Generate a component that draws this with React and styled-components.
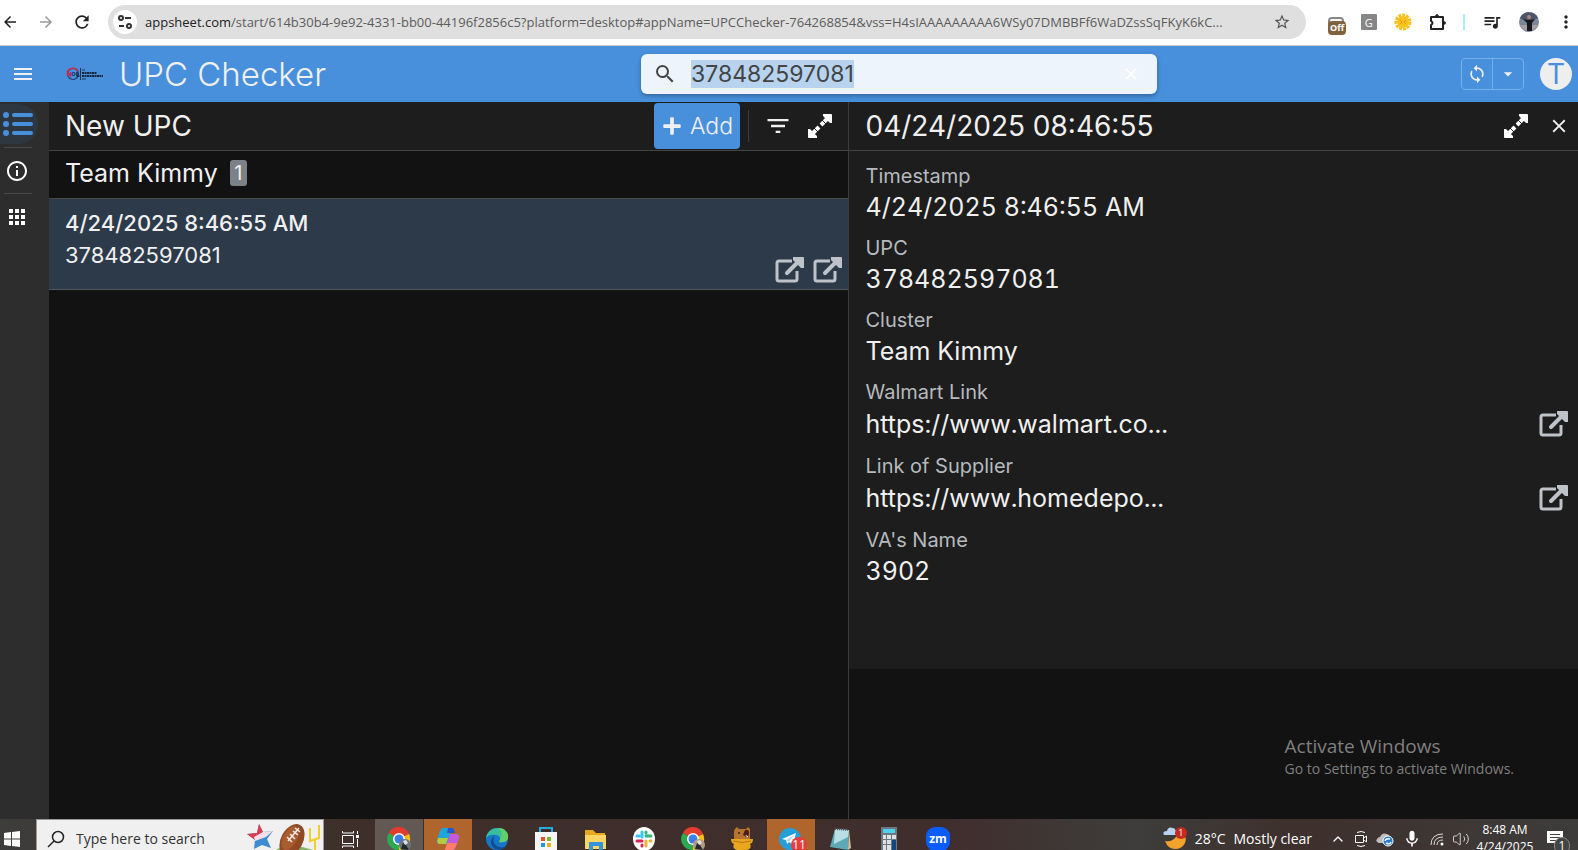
import React, { useEffect, useRef } from "react";
import styled, { createGlobalStyle, css } from "styled-components";
import {
  MdApps,
  MdArrowBack,
  MdArrowDropDown,
  MdArrowForward,
  MdClose,
  MdFilterList,
  MdInfoOutline,
  MdMenu,
  MdMic,
  MdMoreVert,
  MdQueueMusic,
  MdRefresh,
  MdSearch,
  MdStarOutline,
  MdSync,
} from "react-icons/md";
import { FaPlus } from "react-icons/fa";
import { ChevronUp, Volume2 } from "lucide-react";

const GlobalStyle = createGlobalStyle`
  * {
    box-sizing: border-box;
  }
  body {
    margin: 0;
    background: #121212;
    overflow: hidden;
  }
  button, input {
    font: inherit;
    color: inherit;
  }
  button {
    display: inline-flex;
    align-items: center;
    justify-content: center;
    padding: 0;
    border: 0;
    background: none;
  }
  h1, h2, h3, p, dl, dt, dd {
    margin: 0;
    font-weight: 400;
  }
  svg {
    display: block;
    flex: none;
  }
`;

const fields = [
  { label: "Timestamp", value: "4/24/2025 8:46:55 AM" },
  { label: "UPC", value: "378482597081" },
  { label: "Cluster", value: "Team Kimmy" },
  { label: "Walmart Link", value: "https://www.walmart.co...", link: true },
  { label: "Link of Supplier", value: "https://www.homedepo...", link: true },
  { label: "VA's Name", value: "3902" },
];

const ExpandIcon = () => (
  <svg width="28" height="28" viewBox="0 0 28 28" fill="#fff">
    <path d="M17 2h8q1 0 1 1v8h-2l-7-7zM11 26H3q-1 0-1-1v-8h2l7 7z" />
    <path d="M23 5L15 13M13 15L5 23" stroke="#fff" strokeWidth="4" />
    <path d="M16 8l4 4M8 16l4 4" stroke="#1d1d1d" strokeWidth="1" />
  </svg>
);

const OpenIcon = () => (
  <svg width="30" height="28" viewBox="0 0 30 28" fill="none" stroke="#bec3c9">
    <path d="M17 5H4q-2 0-2 2v16q0 2 2 2h16q2 0 2-2v-8" strokeWidth="3" />
    <path d="M12 17L25 4" strokeWidth="4" strokeLinecap="round" />
    <path d="M18 1h10q1 0 1 1v10h-3l-8-8z" fill="#bec3c9" stroke="none" />
  </svg>
);

const ListIcon = () => (
  <svg width="30" height="24" viewBox="0 0 30 24" fill="#4890dc">
    <circle cx="3" cy="3" r="3" />
    <circle cx="3" cy="12" r="3" />
    <circle cx="3" cy="21" r="3" />
    <path d="M11 3h17M11 12h17M11 21h17" stroke="#4890dc" strokeWidth="4" strokeLinecap="round" />
  </svg>
);

const TuneIcon = () => (
  <svg width="14" height="14" viewBox="0 0 14 14" fill="none" stroke="#333" strokeWidth="2">
    <circle cx="3" cy="3" r="2" />
    <path d="M7 3h6M1 11h5" />
    <circle cx="11" cy="11" r="2" />
  </svg>
);

const PuzzleIcon = () => (
  <svg width="18" height="18" viewBox="0 0 18 18" fill="none" stroke="#222" strokeWidth="2">
    <path d="M2 4h12v12H2v-4q3-2 0-4z" strokeLinejoin="round" />
    <path d="M6 3q2-4 4 0zM15 8q4 2 0 4z" fill="#222" stroke="none" />
  </svg>
);

const Logo = () => (
  <svg width="38" height="16" viewBox="0 0 38 16">
    <circle cx="7" cy="8" r="5.5" fill="none" stroke="#243a63" strokeWidth="1.2" />
    <path d="M2 5a6 6 0 0 1 10 0" fill="none" stroke="#c52c50" strokeWidth="1.6" />
    <path d="M1.500 10V6l3 4V6" fill="none" stroke="#d0244c" strokeWidth="1.4" />
    <circle cx="7.500" cy="8" r="1.500" fill="none" stroke="#143a80" strokeWidth="1.2" />
    <path d="M11 6v4h2.500" fill="none" stroke="#18263e" strokeWidth="1.4" />
    <path d="M14.500 2v12" stroke="#20344e" />
    <path d="M16 4h3M16 13h4" stroke="#1d3450" />
    <path d="M16 7h15M16 10h21" stroke="#17263a" strokeWidth="2" strokeDasharray="2 .5" />
  </svg>
);

const Chrome = ({ face }) => (
  <svg width="24" height="24" viewBox="0 0 24 24">
    <path d="M12 12L2 6a11 11 0 0 1 20 1z" fill="#e33b2e" />
    <path d="M12 12L22 7a11 11 0 0 1-10 16z" fill="#fbc116" />
    <path d="M12 12v11A11 11 0 0 1 2 6z" fill="#2da94f" />
    <circle cx="12" cy="12" r="6" fill="#fff" />
    <circle cx="12" cy="12" r="4.500" fill="#3d7fe8" />
    <circle cx="18" cy="18" r="6" fill={face} />
    <path d="M14 22l2-6 3 2 3 5z" fill="#26282b" />
    <path d="M16 14l3-1 2 3-3 2z" fill="#dce2e6" />
  </svg>
);

const Copilot = () => (
  <svg width="24" height="24" viewBox="0 0 24 24">
    <path d="M7 1h9l-5 16H4q-4 0-3-4L4 4q1-3 3-3z" fill="#20a5d8" />
    <path d="M2 11h10l-2 6H4q-4 0-2-6z" fill="#b6c93d" />
    <path d="M12 1h4q2 0 3 5h-8z" fill="#2657cf" />
    <path d="M14 7h6q4 0 3 4l-3 9q-1 3-4 3H9z" fill="#c05be0" />
    <path d="M11 16h10l-2 5q-1 2-3 2H9z" fill="#ff7e68" />
  </svg>
);

const Edge = () => (
  <svg width="24" height="24" viewBox="0 0 24 24">
    <circle cx="12" cy="12" r="11" fill="#1677c8" />
    <path d="M1 11C2 4 8 1 13 1c7 0 11 5 10 10-1 4-5 5-9 4 2-3 1-7-3-7-4-1-8 0-10 3z" fill="#38bd9e" />
    <path d="M13 1c7 0 11 5 10 10-1 4-5 5-9 4 2-4 5-10-1-14z" fill="#63cf68" />
    <path d="M10 9c-3 3-2 9 4 11 3 1 6 0 8-2-5 8-17 5-16-4q1-4 4-5z" fill="#124c91" />
  </svg>
);

const Store = () => (
  <svg width="24" height="26" viewBox="0 0 24 26">
    <path d="M6 7V2h12v5" fill="none" stroke="#29a9e0" strokeWidth="2" />
    <path d="M1 6h22v18q0 2-2 2H3q-2 0-2-2z" fill="#f6f6f6" />
    <path d="M7 11h4v4H7z" fill="#ee4f25" />
    <path d="M13 11h4v4h-4z" fill="#7cb82f" />
    <path d="M7 17h4v4H7z" fill="#2396df" />
    <path d="M13 17h4v4h-4z" fill="#f5ae18" />
  </svg>
);

const Folder = () => (
  <svg width="24" height="24" viewBox="0 0 24 24">
    <path d="M2 3h8l3 3h9v5H2z" fill="#e8a91e" />
    <path d="M2 8h21v14H2z" fill="#ffd665" />
    <path d="M6 24v-9h14v9h-4v-5h-6v5z" fill="#3693d8" />
  </svg>
);

const Slack = () => (
  <svg width="24" height="26" viewBox="0 0 24 26" fill="none" strokeWidth="3" strokeLinecap="round">
    <ellipse cx="12" cy="13" rx="11" ry="12" fill="#fff" />
    <path d="M10 6v5M5 10h2" stroke="#36c5f0" />
    <path d="M14 10h5M14 6v1" stroke="#2eb67d" />
    <path d="M14 15v5M18 15h1" stroke="#ecb22e" />
    <path d="M5 15h5M10 19v1" stroke="#e01e5a" />
  </svg>
);

const Bear = () => (
  <svg width="24" height="26" viewBox="0 0 24 26">
    <path d="M4 15V6q0-2 1-3l2-2 2 2h7l2-2 2 2v12z" fill="#b5742f" />
    <path d="M15 4q4-1 4 3l-1 5-5-3z" fill="#4d1e1a" />
    <path d="M15 9l3 1v2z" fill="#fff" />
    <circle cx="9" cy="7" r="1" fill="#402010" />
    <path d="M1 13h22q0 4-3 5 3 6-8 7-11-1-8-7-3-1-3-5z" fill="#e9a71d" />
    <path d="M3 15q9 3 18 0" stroke="#b87712" fill="none" />
  </svg>
);

const Telegram = () => (
  <svg width="24" height="24" viewBox="0 0 24 24">
    <circle cx="11" cy="12" r="11" fill="#259ed9" />
    <path d="M3 12l14-6-3 12-4-3-2 2-1-4z" fill="#fff" />
    <path d="M7 13l8-5-5 7z" fill="#b8d9ed" />
  </svg>
);

const Notepad = () => (
  <svg width="24" height="24" viewBox="0 0 24 24">
    <path d="M7 2l14 1-1 20-18-3z" fill="#5da9b5" />
    <path d="M7 2l14 1-1 7-14 7z" fill="#b9dfe4" />
    <path d="M21 3l2 18-3 2z" fill="#d2c49c" />
    <path d="M7 2l14 1" stroke="#555" strokeWidth="2" strokeDasharray="1 1" />
  </svg>
);

const Calculator = () => (
  <svg width="24" height="26" viewBox="0 0 24 26">
    <path d="M4 1h16v25H4z" fill="#6e7880" />
    <path d="M6 3h12v4H6z" fill="#4fd1ed" />
    <path d="M6 9h3v4H6zM10 9h4v4h-4zM15 9h4v4h-4zM6 14h3v4H6zM10 14h4v4h-4zM6 19h3v5H6zM10 19h4v5h-4z" fill="#dbe1e5" />
    <path d="M15 14h4v10h-4z" fill="#13467f" />
  </svg>
);

const WindowsIcon = () => (
  <svg width="16" height="16" viewBox="0 0 16 16" fill="#fff">
    <path d="M0 2l7-1v6.500H0zM8 1l8-1v7.500H8zM0 8.500h7V15l-7-1zM8 8.500h8V16l-8-1z" />
  </svg>
);

const FootballArt = () => (
  <svg width="76" height="38" viewBox="0 0 76 38">
    <path d="M24 34q8-8 20-10l30 8v6H24z" fill="#8cb56c" />
    <path d="M12 4l4 8 10-1-6 8 4 9-9-3-8 4 1-9-8-6 10-1z" fill="#3d8bd0" />
    <path d="M12 4l4 8-8 8-8-6 10-1z" fill="#dc3d4c" />
    <path d="M7 17l9-5 10-1-7 6-11 4z" fill="#f4dfe8" />
    <ellipse cx="45" cy="20" rx="11" ry="17" transform="rotate(28 45 20)" fill="#8f4a25" />
    <ellipse cx="43" cy="18" rx="7" ry="13" transform="rotate(28 43 18)" fill="#a85c30" />
    <path d="M41 21L52 8" stroke="#f3eae5" strokeWidth="1.500" />
    <path d="M40 17l5 5M43 14l5 5M46 11l5 4M48 8l5 4" stroke="#f3eae5" strokeWidth="1.500" />
    <path d="M63 8v13l9-3V5M68 20v14" fill="none" stroke="#efd02b" strokeWidth="2" />
  </svg>
);

const TaskViewIcon = () => (
  <svg width="18" height="18" viewBox="0 0 18 18" fill="none" stroke="#fff">
    <path d="M1.500 5.500h11v8h-11zM1.500 1v2h11V1M1.500 18v-2h11v2M16.500 1v3M16.500 9v8" />
    <path d="M15 5h3v3h-3z" fill="#fff" stroke="none" />
  </svg>
);

const SearchLens = () => (
  <svg width="18" height="18" viewBox="0 0 18 18" fill="none" stroke="#222" strokeWidth="1.500">
    <circle cx="11" cy="7" r="5.500" />
    <path d="M7 11l-6 6" />
  </svg>
);

const Flower = () => (
  <svg width="18" height="18" viewBox="0 0 18 18">
    <circle cx="9" cy="9" r="6" fill="#fbc21d" />
    <circle cx="9" cy="9" r="7" fill="none" stroke="#fbc21d" strokeWidth="3" strokeDasharray="3 1" />
    <path d="M6 7l2 2-2 2M12 7l-2 2 2 2" fill="none" stroke="#e69d10" />
  </svg>
);

const Portrait = () => (
  <svg width="20" height="20" viewBox="0 0 20 20">
    <circle cx="10" cy="10" r="10" fill="#7d8697" />
    <path d="M1 6a10 10 0 0 1 18 0l-5 2H4z" fill="#4c556c" />
    <path d="M1 13h18a10 10 0 0 1-18 0z" fill="#a7a0a0" />
    <path d="M4 7l4 1h4l4-1-3 4v8H8v-8z" fill="#17181d" />
    <circle cx="10" cy="5" r="2" fill="#b48472" />
  </svg>
);

const Moon = () => (
  <svg width="24" height="24" viewBox="0 0 24 24">
    <path d="M2 15q9 2 14-9 9 3 6 11-3 6-10 6T2 15z" fill="#f2a32c" />
    <path d="M1 9q-2-4 3-4 1-5 6-3 2 0 3 3 4 1 1 4z" fill="#b8d2f1" />
  </svg>
);

const MeetNow = () => (
  <svg width="14" height="18" viewBox="0 0 14 18" fill="none" stroke="#fff">
    <path d="M1.500 5.500h8v7h-8zM9.500 8l3-2v6l-3-2M3 2.500q4-2 8 0M3 15.500q4 2 8 0" />
  </svg>
);

const Cloud = () => (
  <svg width="18" height="16" viewBox="0 0 18 16">
    <path d="M3 12q-4-1-2-4 1-2 3-2 2-5 7-3 3 1 3 4 4 2 1 5z" fill="#bdbdbd" />
    <circle cx="12" cy="10" r="5" fill="#2479d0" stroke="#fff" />
    <path d="M9 10q1-3 5-2M15 11q-1 3-5 1" fill="none" stroke="#fff" strokeWidth="1.500" />
  </svg>
);

const Wifi = () => (
  <svg width="14" height="14" viewBox="0 0 14 14" fill="none" stroke="#ddd">
    <path d="M1 13Q1 2 13 2M4 13q0-8 9-8M7 13q0-5 6-5" />
    <circle cx="12" cy="12" r="1.500" fill="#fff" stroke="none" />
  </svg>
);

const Bubble = () => (
  <svg width="18" height="18" viewBox="0 0 18 18">
    <path d="M1 1h16v12h-5v4l-4-4H1z" fill="#fff" />
    <path d="M4 4.500h10M4 7.500h10M4 10.500h6" stroke="#444" />
  </svg>
);

const apps = [
  { name: "Chrome", icon: <Chrome face="#69747c" />, tone: "#635954" },
  { name: "Copilot", icon: <Copilot />, tone: "#b0652c" },
  { name: "Edge", icon: <Edge /> },
  { name: "Store", icon: <Store /> },
  { name: "Files", icon: <Folder /> },
  { name: "Slack", icon: <Slack /> },
  { name: "Chrome profile", icon: <Chrome face="#b79a83" /> },
  { name: "Bear", icon: <Bear /> },
  { name: "Telegram", icon: <Telegram />, tone: "#b0652c", count: 11 },
  { name: "Notepad", icon: <Notepad /> },
  { name: "Calculator", icon: <Calculator /> },
  { name: "Zoom", zoom: true },
];

const App = () => {
  const search = useRef(null);

  useEffect(() => {
    search.current.focus();
    search.current.select();
  }, []);

  return (
    <Screen>
      <GlobalStyle />
      <BrowserBar>
        <NavButtons>
          <button aria-label="Back"><MdArrowBack size={18} /></button>
          <NavOff aria-label="Forward" disabled><MdArrowForward size={18} /></NavOff>
          <button aria-label="Reload"><MdRefresh size={20} /></button>
        </NavButtons>
        <Address>
          <SiteButton aria-label="Site information"><TuneIcon /></SiteButton>
          <Url>
            <b>appsheet.com</b>
            /start/614b30b4-9e92-4331-bb00-44196f2856c5?platform=desktop#appName=UPCChecker-764268854&amp;vss=H4sIAAAAAAAAA6WSy07DMBBFf6WaDZssSqFKyK6kC...
          </Url>
          <button aria-label="Bookmark"><MdStarOutline size={18} color="#555" /></button>
        </Address>
        <Extensions>
          <OffButton aria-label="Blocker"><i /><span>Off</span></OffButton>
          <SquareG>G</SquareG>
          <button aria-label="Flower"><Flower /></button>
          <button aria-label="Extensions"><PuzzleIcon /></button>
          <Divider />
          <button aria-label="Media"><MdQueueMusic size={20} /></button>
          <button aria-label="Profile"><Portrait /></button>
          <button aria-label="Menu"><MdMoreVert size={20} /></button>
        </Extensions>
      </BrowserBar>

      <AppHeader>
        <Brand>
          <button aria-label="Open menu"><MdMenu size={24} /></button>
          <Logo />
          <h1>UPC Checker</h1>
        </Brand>
        <SearchBox>
          <MdSearch size={24} color="#444" />
          <SearchInput ref={search} aria-label="Search" defaultValue="378482597081" />
          <button aria-label="Clear"><MdClose size={20} color="#fff" /></button>
        </SearchBox>
        <Account>
          <SyncGroup>
            <button aria-label="Sync"><MdSync size={20} /></button>
            <button aria-label="Sync options"><MdArrowDropDown size={20} /></button>
          </SyncGroup>
          <Avatar aria-label="Account">T</Avatar>
        </Account>
      </AppHeader>

      <Workspace>
        <Rail>
          <RailButton $active aria-label="List"><ListIcon /></RailButton>
          <RailButton aria-label="About"><MdInfoOutline size={24} /></RailButton>
          <RailButton aria-label="Apps"><MdApps size={24} /></RailButton>
        </Rail>

        <ListPane>
          <PaneHeader>
            <h2>New UPC</h2>
            <AddButton><FaPlus size={20} />Add</AddButton>
            <Tools>
              <button aria-label="Filter"><MdFilterList size={28} /></button>
              <button aria-label="Expand"><ExpandIcon /></button>
            </Tools>
          </PaneHeader>
          <GroupRow>
            <h3>Team Kimmy</h3>
            <Count>1</Count>
          </GroupRow>
          <Record>
            <div>
              <strong>4/24/2025 8:46:55 AM</strong>
              <p>378482597081</p>
            </div>
            <RecordLinks>
              <a href="#walmart" aria-label="Walmart Link"><OpenIcon /></a>
              <a href="#supplier" aria-label="Link of Supplier"><OpenIcon /></a>
            </RecordLinks>
          </Record>
        </ListPane>

        <DetailPane>
          <PaneHeader>
            <h2>04/24/2025 08:46:55</h2>
            <DetailTools>
              <button aria-label="Expand"><ExpandIcon /></button>
              <button aria-label="Close"><MdClose size={22} /></button>
            </DetailTools>
          </PaneHeader>
          <Fields>
            {fields.map((field) => (
              <Field key={field.label} $link={field.link}>
                <dt>{field.label}</dt>
                <dd>
                  {field.value}
                  {field.link && (
                    <a href="#open" aria-label={field.label}><OpenIcon /></a>
                  )}
                </dd>
              </Field>
            ))}
          </Fields>
          <Watermark>
            <h3>Activate Windows</h3>
            <p>Go to Settings to activate Windows.</p>
          </Watermark>
        </DetailPane>
      </Workspace>

      <Taskbar>
        <StartButton aria-label="Start"><WindowsIcon /></StartButton>
        <TaskSearch>
          <SearchLens />
          <input aria-label="Type here to search" placeholder="Type here to search" />
          <FootballArt />
        </TaskSearch>
        <TaskButton aria-label="Task view"><TaskViewIcon /></TaskButton>
        {apps.map((app) => (
          <TaskButton key={app.name} aria-label={app.name} $tone={app.tone}>
            {app.zoom ? <ZoomMark>zm</ZoomMark> : app.icon}
            {app.count && <TaskCount>{app.count}</TaskCount>}
          </TaskButton>
        ))}
        <Weather>
          <WeatherIcon><Moon /><span>1</span></WeatherIcon>
          <span>28°C</span>
          <span>Mostly clear</span>
        </Weather>
        <Tray>
          <ChevronUp size={16} />
          <MeetNow />
          <Cloud />
          <MdMic size={20} />
          <Wifi />
          <Volume2 size={18} strokeWidth={1} />
        </Tray>
        <Clock>
          <span>8:48 AM</span>
          <span>4/24/2025</span>
        </Clock>
        <Notices aria-label="Notifications"><Bubble /><span>1</span></Notices>
      </Taskbar>
    </Screen>
  );
};

export default App;

const ui = `"Open Sans", "Noto Sans", sans-serif`;

const Screen = styled.div`
  display: flex;
  flex-direction: column;
  height: 100vh;
  overflow: hidden;
  background: #121212;
  color: #f0f0f0;
  font-family: Inter, "Liberation Sans", sans-serif;
`;

const BrowserBar = styled.header`
  display: flex;
  align-items: center;
  flex: none;
  height: 46px;
  padding-bottom: 1px;
  border-bottom: 1px solid #ccc;
  background: #fff;
  color: #222;
  font-family: ${ui};
`;

const NavButtons = styled.nav`
  display: flex;
  align-items: center;
  justify-content: space-between;
  width: 108px;
  padding: 0 16px 0 1px;
`;

const NavOff = styled.button`
  color: #999;
`;

const Address = styled.div`
  display: flex;
  align-items: center;
  flex: 1;
  min-width: 0;
  height: 34px;
  padding: 0 15px 0 5px;
  border-radius: 17px;
  background: #dfdfdf;
`;

const SiteButton = styled.button`
  flex: none;
  width: 24px;
  height: 24px;
  margin-right: 8px;
  border-radius: 50%;
  background: #fff;
`;

const Url = styled.div`
  flex: 1;
  min-width: 0;
  overflow: hidden;
  color: #5c5c5c;
  font-size: 13px;
  white-space: nowrap;

  b {
    color: #222;
    font-weight: 400;
  }
`;

const Extensions = styled.div`
  display: flex;
  align-items: center;
  justify-content: space-between;
  width: 272px;
  padding: 0 2px 0 16px;
`;

const OffButton = styled.button`
  position: relative;
  justify-content: flex-end;
  width: 22px;
  height: 22px;

  i {
    width: 16px;
    height: 10px;
    border: 2px solid #888;
    border-radius: 4px 4px 0 0;
  }

  span {
    position: absolute;
    top: 10px;
    left: 6px;
    padding: 0 2px;
    border-radius: 4px;
    background: #80633c;
    color: #fff;
    font-size: 9px;
    font-weight: 700;
    line-height: 14px;
  }
`;

const SquareG = styled.button`
  width: 16px;
  height: 16px;
  border-radius: 1px;
  background: #868686;
  color: #fff;
  font-size: 11px;
`;

const Divider = styled.i`
  width: 2px;
  height: 16px;
  background: #b3e8f2;
`;

const AppHeader = styled.header`
  display: grid;
  grid-template-columns: 641px 516px 1fr;
  align-items: center;
  flex: none;
  height: 56px;
  background: #4890dc;
`;

const Brand = styled.div`
  display: flex;
  align-items: center;
  padding-left: 11px;

  button + svg {
    margin: 0 15px 0 31px;
  }

  h1 {
    font-size: 33px;
    font-weight: 300;
    line-height: 40px;
  }
`;

const SearchBox = styled.label`
  display: flex;
  align-items: center;
  height: 40px;
  padding: 0 16px 0 12px;
  border-radius: 6px;
  background: #edf4fc;
  box-shadow: 0 2px 4px rgba(0, 0, 0, 0.3);
`;

const SearchInput = styled.input`
  flex: 1;
  min-width: 0;
  height: 28px;
  margin-left: 14px;
  padding: 0;
  border: 0;
  outline: 0;
  background: none;
  color: #444;
  font-size: 23px;

  &::selection {
    background: #b7d3f0;
    color: #444;
  }
`;

const Account = styled.div`
  display: flex;
  align-items: center;
  justify-content: flex-end;
  gap: 16px;
  padding-right: 6px;
`;

const SyncGroup = styled.div`
  display: flex;
  height: 32px;
  border: 1px solid #76b0ec;
  border-radius: 4px;

  button {
    width: 30px;
  }

  button + button {
    width: 31px;
    border-left: 1px solid #76b0ec;
  }
`;

const Avatar = styled.button`
  width: 32px;
  height: 32px;
  border-radius: 50%;
  background: #eee;
  color: #4890dc;
  font-size: 28px;
`;

const Workspace = styled.div`
  display: flex;
  flex: 1;
  min-height: 0;
`;

const Rail = styled.nav`
  display: flex;
  flex-direction: column;
  flex: none;
  width: 49px;
  background: #2d2d2d;
`;

const RailButton = styled.button`
  width: 28px;
  height: 46px;
  padding-right: 2px;
  margin-left: 4px;
  color: #fff;

  & + & {
    border-top: 1px solid #4a4a4a;
  }

  ${(props) =>
    props.$active &&
    css`
      && {
        width: 38px;
        height: 40px;
        margin: 2px 0 3px;
        border-radius: 0 20px 20px 0;
        background: #2e3740;
      }
    `}
`;

const ListPane = styled.main`
  flex: 800 1 0;
  min-width: 0;
  border-right: 1px solid #3c3c3c;
`;

const PaneHeader = styled.div`
  display: flex;
  align-items: center;
  flex: none;
  height: 49px;
  padding-left: 16px;
  border-bottom: 1px solid #444;
  background: #1d1d1d;

  h2 {
    flex: 1;
    font-size: 28px;
    line-height: 32px;
  }
`;

const AddButton = styled.button`
  gap: 8px;
  width: 86px;
  height: 46px;
  border-radius: 4px;
  background: #4890dc;
  font-size: 23px;
  font-weight: 300;
`;

const Tools = styled.div`
  display: flex;
  align-items: center;
  gap: 14px;
  height: 32px;
  margin-left: 8px;
  padding: 0 14px 0 15px;
  border-left: 1px solid #3c3c3c;
`;

const GroupRow = styled.div`
  display: flex;
  align-items: center;
  gap: 12px;
  height: 48px;
  padding: 0 16px 4px;
  border-bottom: 1px solid #4a4a4a;

  h3 {
    font-size: 25px;
    line-height: 32px;
  }
`;

const Count = styled.span`
  width: 17px;
  border-radius: 3px;
  background: #7c8087;
  font-size: 20px;
  line-height: 26px;
  text-align: center;
`;

const Record = styled.article`
  display: flex;
  justify-content: space-between;
  height: 91px;
  padding: 8px 5px 5px 16px;
  border-bottom: 1px solid #4e5761;
  background: #2c3a4a;

  strong {
    display: block;
    font-size: 22px;
    font-weight: 500;
    line-height: 32px;
  }

  p {
    font-size: 22px;
    line-height: 32px;
  }
`;

const RecordLinks = styled.div`
  display: flex;
  align-items: flex-end;
  gap: 8px;
`;

const DetailPane = styled.aside`
  display: flex;
  flex-direction: column;
  flex: 729 1 0;
  min-width: 0;
`;

const DetailTools = styled.div`
  display: flex;
  align-items: center;
  gap: 18px;
  padding-right: 8px;
`;

const Fields = styled.dl`
  flex: 1;
  padding: 7px 9px 0 16px;
  background: #1d1d1d;
`;

const Field = styled.div`
  padding: 4px 0 6px;

  dt {
    color: #b5babf;
    font-size: 20px;
    line-height: 28px;
  }

  dd {
    display: flex;
    align-items: center;
    justify-content: space-between;
    height: ${(props) => (props.$link ? "36px" : "34px")};
    font-size: 25px;
    font-variant-numeric: tabular-nums;
  }
`;

const Watermark = styled.div`
  flex: none;
  height: 150px;
  padding: 64px 64px 0 0;
  margin-left: auto;
  color: #7f7f7f;
  font-family: ${ui};

  h3 {
    font-size: 19px;
    line-height: 26px;
  }

  p {
    font-size: 14px;
    line-height: 20px;
  }
`;

const Taskbar = styled.footer`
  display: flex;
  flex: none;
  height: 31px;
  overflow: hidden;
  background: linear-gradient(90deg, #3d3d3b, #3e2f2a 22%, #402e2d 60%, #3d3d3b 72%, #3e302c 82%, #3d3c3b);
  color: #fff;
  font-family: ${ui};
  font-size: 14px;
  line-height: 40px;
`;

const StartButton = styled.button`
  width: 36px;
  height: 40px;
  padding-right: 12px;
`;

const TaskSearch = styled.label`
  display: flex;
  align-items: center;
  width: 288px;
  height: 40px;
  margin-right: 2px;
  padding-left: 10px;
  border: 1px solid #999;
  background: #f0f0f0;

  input {
    flex: 1;
    min-width: 0;
    padding: 0 0 0 11px;
    border: 0;
    outline: 0;
    background: none;
  }

  input::placeholder {
    color: #333;
    opacity: 1;
  }
`;

const TaskButton = styled.button`
  position: relative;
  width: 48px;
  height: 40px;
  margin-right: 1px;
  background: ${(props) => props.$tone || "none"};
`;

const TaskCount = styled.span`
  position: absolute;
  right: 8px;
  top: 18px;
  width: 16px;
  border-radius: 8px;
  background: #e93d3d;
  font-size: 12px;
  line-height: 16px;
`;

const ZoomMark = styled.span`
  width: 24px;
  border-radius: 9px;
  background: #0b5cff;
  font-size: 12px;
  font-weight: 700;
  line-height: 24px;
`;

const Weather = styled.div`
  display: flex;
  gap: 8px;
  margin-left: auto;
`;

const WeatherIcon = styled.div`
  position: relative;
  padding-top: 7px;

  span {
    position: absolute;
    top: 8px;
    right: 0;
    width: 12px;
    border-radius: 6px;
    background: #c52b1f;
    font-size: 9px;
    line-height: 12px;
    text-align: center;
  }
`;

const Tray = styled.div`
  display: flex;
  align-items: center;
  gap: 8px;
  height: 40px;
  margin-left: 18px;
`;

const Clock = styled.div`
  display: flex;
  flex-direction: column;
  width: 70px;
  padding-top: 2px;
  font-size: 12px;
  line-height: 17px;
  text-align: center;
`;

const Notices = styled.button`
  position: relative;
  width: 30px;
  height: 40px;
  margin-right: 8px;

  span {
    position: absolute;
    top: 18px;
    right: 0;
    width: 16px;
    border: 1px solid #888;
    border-radius: 8px;
    background: #444;
    font-size: 12px;
    line-height: 16px;
  }
`;
